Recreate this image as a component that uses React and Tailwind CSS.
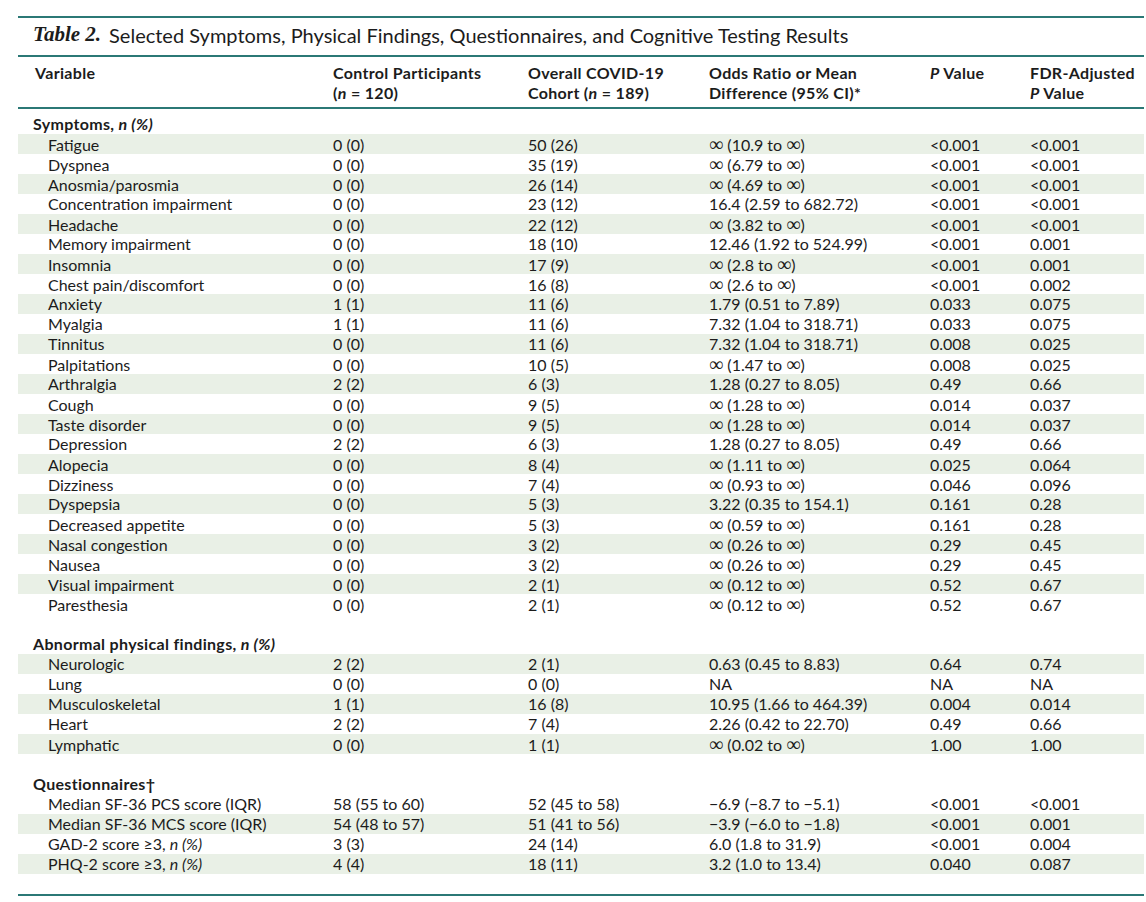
import React from 'react';

const symptoms = [
  ['Fatigue', '0 (0)', '50 (26)', '∞ (10.9 to ∞)', '<0.001', '<0.001'],
  ['Dyspnea', '0 (0)', '35 (19)', '∞ (6.79 to ∞)', '<0.001', '<0.001'],
  ['Anosmia/parosmia', '0 (0)', '26 (14)', '∞ (4.69 to ∞)', '<0.001', '<0.001'],
  ['Concentration impairment', '0 (0)', '23 (12)', '16.4 (2.59 to 682.72)', '<0.001', '<0.001'],
  ['Headache', '0 (0)', '22 (12)', '∞ (3.82 to ∞)', '<0.001', '<0.001'],
  ['Memory impairment', '0 (0)', '18 (10)', '12.46 (1.92 to 524.99)', '<0.001', '0.001'],
  ['Insomnia', '0 (0)', '17 (9)', '∞ (2.8 to ∞)', '<0.001', '0.001'],
  ['Chest pain/discomfort', '0 (0)', '16 (8)', '∞ (2.6 to ∞)', '<0.001', '0.002'],
  ['Anxiety', '1 (1)', '11 (6)', '1.79 (0.51 to 7.89)', '0.033', '0.075'],
  ['Myalgia', '1 (1)', '11 (6)', '7.32 (1.04 to 318.71)', '0.033', '0.075'],
  ['Tinnitus', '0 (0)', '11 (6)', '7.32 (1.04 to 318.71)', '0.008', '0.025'],
  ['Palpitations', '0 (0)', '10 (5)', '∞ (1.47 to ∞)', '0.008', '0.025'],
  ['Arthralgia', '2 (2)', '6 (3)', '1.28 (0.27 to 8.05)', '0.49', '0.66'],
  ['Cough', '0 (0)', '9 (5)', '∞ (1.28 to ∞)', '0.014', '0.037'],
  ['Taste disorder', '0 (0)', '9 (5)', '∞ (1.28 to ∞)', '0.014', '0.037'],
  ['Depression', '2 (2)', '6 (3)', '1.28 (0.27 to 8.05)', '0.49', '0.66'],
  ['Alopecia', '0 (0)', '8 (4)', '∞ (1.11 to ∞)', '0.025', '0.064'],
  ['Dizziness', '0 (0)', '7 (4)', '∞ (0.93 to ∞)', '0.046', '0.096'],
  ['Dyspepsia', '0 (0)', '5 (3)', '3.22 (0.35 to 154.1)', '0.161', '0.28'],
  ['Decreased appetite', '0 (0)', '5 (3)', '∞ (0.59 to ∞)', '0.161', '0.28'],
  ['Nasal congestion', '0 (0)', '3 (2)', '∞ (0.26 to ∞)', '0.29', '0.45'],
  ['Nausea', '0 (0)', '3 (2)', '∞ (0.26 to ∞)', '0.29', '0.45'],
  ['Visual impairment', '0 (0)', '2 (1)', '∞ (0.12 to ∞)', '0.52', '0.67'],
  ['Paresthesia', '0 (0)', '2 (1)', '∞ (0.12 to ∞)', '0.52', '0.67'],
];

const physical = [
  ['Neurologic', '2 (2)', '2 (1)', '0.63 (0.45 to 8.83)', '0.64', '0.74'],
  ['Lung', '0 (0)', '0 (0)', 'NA', 'NA', 'NA'],
  ['Musculoskeletal', '1 (1)', '16 (8)', '10.95 (1.66 to 464.39)', '0.004', '0.014'],
  ['Heart', '2 (2)', '7 (4)', '2.26 (0.42 to 22.70)', '0.49', '0.66'],
  ['Lymphatic', '0 (0)', '1 (1)', '∞ (0.02 to ∞)', '1.00', '1.00'],
];

const questionnaires = [
  [<>Median SF-36 PCS score (IQR)</>, '58 (55 to 60)', '52 (45 to 58)', '−6.9 (−8.7 to −5.1)', '<0.001', '<0.001'],
  [<>Median SF-36 MCS score (IQR)</>, '54 (48 to 57)', '51 (41 to 56)', '−3.9 (−6.0 to −1.8)', '<0.001', '0.001'],
  [<>GAD-2 score ≥3, <i>n (%)</i></>, '3 (3)', '24 (14)', '6.0 (1.8 to 31.9)', '<0.001', '0.004'],
  [<>PHQ-2 score ≥3, <i>n (%)</i></>, '4 (4)', '18 (11)', '3.2 (1.0 to 13.4)', '0.040', '0.087'],
];

const grid = 'grid grid-cols-[300px_195px_181px_221px_100px_1fr] pl-[15px]';

// wider infinity glyph than Lato's
const fmt = (v) =>
  typeof v === 'string' && v.includes('∞')
    ? v.split('∞').map((part, i, arr) => (
        <React.Fragment key={i}>
          {part}
          {i < arr.length - 1 && (
            <span className="font-['Liberation_Serif',serif] text-[20px] leading-none">∞</span>
          )}
        </React.Fragment>
      ))
    : v;

const Row = ({ cells, shaded }) => (
  <div className={`${grid} h-5 items-center leading-5 ${shaded ? 'bg-[#e9f0e6]' : ''}`}>
    <div className="pl-[15px] whitespace-nowrap">{cells[0]}</div>
    {cells.slice(1).map((c, i) => (
      <div key={i} className="whitespace-nowrap">{fmt(c)}</div>
    ))}
  </div>
);

const Section = ({ children }) => (
  <div className={`${grid} h-5 items-center leading-5 font-bold tracking-[0.02em]`}>
    <div className="whitespace-nowrap">{children}</div>
  </div>
);

export default function App() {
  return (
    <div className="bg-white w-[1146px] h-[902px] pt-4 pl-[18px] pr-[2px] text-[#1c1c1c] font-['Lato',sans-serif] text-[16px]">
      <div className="border-t-2 border-[#2b7876]" />
      <div className="h-[37px] flex items-center pl-[15px] pb-[4px] text-[20px] whitespace-nowrap">
        <span className="font-['Liberation_Serif',serif] font-bold italic text-[21px] mr-2">Table 2.</span>
        <span>Selected Symptoms, Physical Findings, Questionnaires, and Cognitive Testing Results</span>
      </div>
      <div className="border-t-2 border-[#2b7876]" />
      <div className={`${grid} pt-[6px] pb-[4px] leading-5 font-bold tracking-[0.02em]`}>
        <div className="pl-[2px]">Variable</div>
        <div>Control Participants<br />(<i>n</i> = 120)</div>
        <div>Overall COVID-19<br />Cohort (<i>n</i> = 189)</div>
        <div>Odds Ratio or Mean<br />Difference (95% CI)*</div>
        <div><i>P</i> Value</div>
        <div>FDR-Adjusted<br /><i>P</i> Value</div>
      </div>
      <div className="border-t-2 border-[#2b7876]" />
      <div className="pt-[5px]">
        <Section>Symptoms, <i>n (%)</i></Section>
        {symptoms.map((r, i) => <Row key={i} cells={r} shaded={i % 2 === 0} />)}
        <div className="h-5" />
        <Section>Abnormal physical findings, <i>n (%)</i></Section>
        {physical.map((r, i) => <Row key={i} cells={r} shaded={i % 2 === 0} />)}
        <div className="h-5" />
        <Section>Questionnaires†</Section>
        {questionnaires.map((r, i) => <Row key={i} cells={r} shaded={i % 2 === 1} />)}
        <div className="h-5" />
      </div>
      <div className="border-t-2 border-[#2b7876]" />
    </div>
  );
}
